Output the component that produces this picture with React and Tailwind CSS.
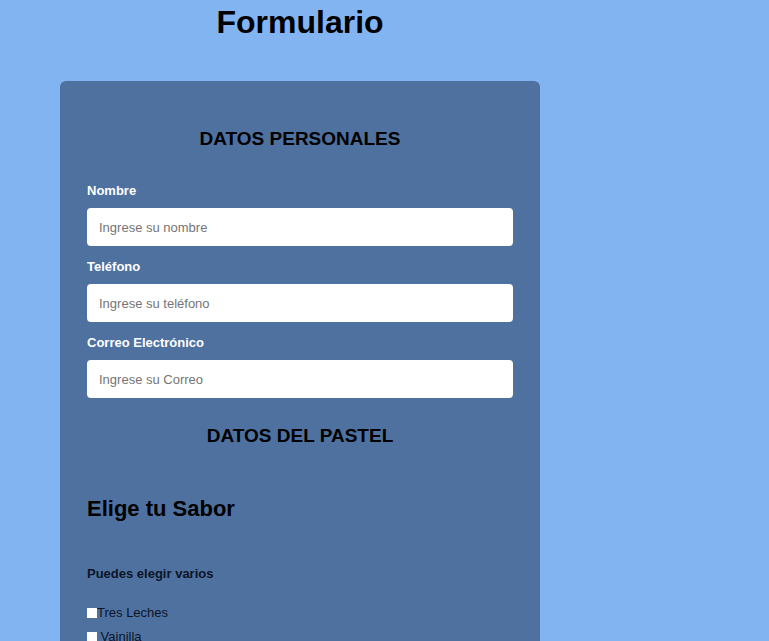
import React from 'react';

const Field = ({ label, placeholder, type = 'text' }) => (
  <div className="mt-[13px] first:mt-0">
    <label className="block text-[13px] leading-[16px] font-bold text-white">{label}</label>
    <input
      type={type}
      placeholder={placeholder}
      className="mt-[9px] block w-full h-[38px] rounded-[4px] bg-white px-3 text-[13px] text-black placeholder:text-[#757575] outline-none"
    />
  </div>
);

const App = () => {
  return (
    <div className="min-h-[641px] bg-[#83b4f2] font-['Liberation_Sans',Arial,sans-serif] text-black">
      <div className="ml-[60px] w-[480px]">
        <h1 className="pt-[4px] text-center text-[32px] leading-[37px] font-bold">Formulario</h1>

        <form className="mt-[40px] rounded-t-[6px] bg-[#4f71a0] px-[27px] pt-[46px] pb-10">
          <h2 className="text-center text-[19px] leading-[24px] font-bold">DATOS PERSONALES</h2>

          <div className="mt-[32px]">
            <Field label="Nombre" placeholder="Ingrese su nombre" />
            <Field label="Teléfono" placeholder="Ingrese su teléfono" type="tel" />
            <Field label="Correo Electrónico" placeholder="Ingrese su Correo" type="email" />
          </div>

          <h2 className="mt-[26px] text-center text-[19px] leading-[24px] font-bold">DATOS DEL PASTEL</h2>

          <h3 className="mt-[47px] text-[22px] leading-[28px] font-bold">Elige tu Sabor</h3>

          <p className="mt-[43px] text-[13px] leading-[16px] font-bold text-[#0b1526]">Puedes elegir varios</p>

          <div className="mt-[23px] text-[13px] leading-[16px] text-[#0b1526]">
            <label className="flex items-center">
              <input type="checkbox" className="m-0 h-[10px] w-[10px] appearance-none bg-white" />
              Tres Leches
            </label>
            <label className="mt-[8px] flex items-center">
              <input type="checkbox" className="m-0 h-[10px] w-[10px] appearance-none bg-white" />
              &nbsp;Vainilla
            </label>
            <label className="mt-[8px] flex items-center">
              <input type="checkbox" className="m-0 h-[10px] w-[10px] appearance-none bg-white" />
              &nbsp;Chocolate
            </label>
          </div>
        </form>
      </div>
    </div>
  );
};

export default App;
